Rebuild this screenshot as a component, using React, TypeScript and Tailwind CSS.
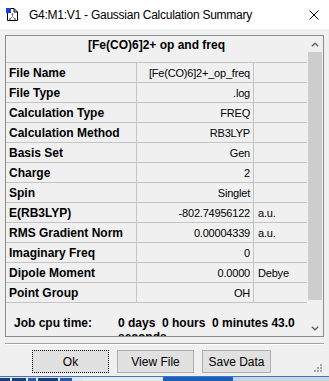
import React from "react";

const rows: [string, string, string][] = [
  ["File Name", "[Fe(CO)6]2+_op_freq", ""],
  ["File Type", ".log", ""],
  ["Calculation Type", "FREQ", ""],
  ["Calculation Method", "RB3LYP", ""],
  ["Basis Set", "Gen", ""],
  ["Charge", "2", ""],
  ["Spin", "Singlet", ""],
  ["E(RB3LYP)", "-802.74956122", "a.u."],
  ["RMS Gradient Norm", "0.00004339", "a.u."],
  ["Imaginary Freq", "0", ""],
  ["Dipole Moment", "0.0000", "Debye"],
  ["Point Group", "OH", ""],
];

function AppIcon() {
  return (
    <svg width="12" height="13" viewBox="0 0 12 13" className="block">
      <path d="M1.5 0.5 H8 L11.5 4 V12.5 H1.5 Z" fill="#fff" stroke="#000" strokeWidth="1" />
      <path d="M8 0.5 V4 H11.5" fill="none" stroke="#000" strokeWidth="1" />
      <rect x="0" y="0" width="5" height="5" fill="#1a3fe0" />
      <path d="M6.5 6 V8.5 M6.5 8.5 L4 11 M6.5 8.5 L9 11" stroke="#8a8a8a" strokeWidth="1" fill="none" />
      <circle cx="6.5" cy="6" r="0.9" fill="#6a6a6a" />
      <circle cx="4" cy="11" r="0.9" fill="#6a6a6a" />
      <circle cx="9" cy="11" r="0.9" fill="#6a6a6a" />
    </svg>
  );
}

export default function App() {
  return (
    <div className="w-[329px] h-[381px] overflow-hidden bg-[#f0f0f0] flex flex-col font-['Liberation_Sans',Arial,sans-serif] text-black">
      {/* Title bar */}
      <div className="h-[29px] bg-white flex items-center pl-[6px] pr-[10px] shrink-0">
        <AppIcon />
        <div className="ml-[11px] text-[12px] tracking-[-0.25px] leading-[14px]">
          G4:M1:V1 - Gaussian Calculation Summary
        </div>
        <div className="flex-1" />
        <svg width="10" height="10" viewBox="0 0 10 10" className="block">
          <path d="M0.5 0.5 L9.5 9.5 M9.5 0.5 L0.5 9.5" stroke="#000" strokeWidth="1" />
        </svg>
      </div>

      {/* Body */}
      <div className="flex-1 flex flex-col px-[5px] pt-[6px]">
        {/* Frame */}
        <div className="h-[302px] border border-[#8c8c8c] flex shrink-0">
          <div className="w-[301px] flex flex-col overflow-hidden">
            <div className="h-[27px] border-b border-[#c4c4c4] flex justify-center pt-[1px] shrink-0">
              <div className="text-[12px] font-bold leading-[16px]">[Fe(CO)6]2+ op and freq</div>
            </div>
            {rows.map(([label, value, unit]) => (
              <div key={label} className="h-[20px] border-b border-[#c4c4c4] flex shrink-0">
                <div className="w-[131px] border-r border-[#c4c4c4] flex items-center pl-[3px] text-[12px] font-bold leading-[14px] whitespace-nowrap">
                  {label}
                </div>
                <div className="w-[117px] border-r border-[#c4c4c4] flex items-center justify-end pr-[3px] text-[11px] tracking-[-0.2px] leading-[14px] whitespace-nowrap">
                  {value}
                </div>
                <div className="flex-1 flex items-center pl-[4px] text-[11px] tracking-[-0.2px] leading-[14px] whitespace-nowrap">
                  {unit}
                </div>
              </div>
            ))}
            <div className="flex-1 overflow-hidden flex pt-[13px] pl-[8px] text-[12px] font-bold leading-[14px]">
              <div className="w-[104px] shrink-0">Job cpu time:</div>
              <div className="w-[182px] whitespace-pre-wrap">{"0 days  0 hours  0 minutes 43.0 seconds"}</div>
            </div>
          </div>
          {/* Scrollbar */}
          <div className="w-[16px] flex flex-col bg-[#f0f0f0]">
            <div className="h-[16px] flex items-center justify-center shrink-0">
              <svg width="8" height="5" viewBox="0 0 8 5" className="block">
                <path d="M0.8 4.3 L4 1.2 L7.2 4.3" stroke="#606060" strokeWidth="1.3" fill="none" />
              </svg>
            </div>
            <div className="flex-1 flex flex-col">
              <div className="h-[248px] mx-[1px] bg-[#cdcdcd]" />
            </div>
            <div className="h-[16px] flex items-center justify-center shrink-0">
              <svg width="8" height="5" viewBox="0 0 8 5" className="block">
                <path d="M0.8 0.7 L4 3.8 L7.2 0.7" stroke="#606060" strokeWidth="1.3" fill="none" />
              </svg>
            </div>
          </div>
        </div>

        {/* Separator */}
        <div className="mt-[6px] h-[1px] bg-[#a0a0a0] shrink-0" />
        <div className="h-[1px] bg-white shrink-0" />

        {/* Buttons */}
        <div className="mt-[5px] flex items-start text-[12px] leading-[14px] shrink-0">
          <div className="ml-[27px] w-[77px] h-[23px] bg-[#e1e1e1] border border-dotted border-black flex items-center justify-center">
            Ok
          </div>
          <div className="ml-[8px] w-[77px] h-[23px] bg-[#e1e1e1] border border-[#adadad] flex items-center justify-center">
            View File
          </div>
          <div className="ml-[8px] w-[69px] h-[23px] bg-[#e1e1e1] border border-[#adadad] flex items-center justify-center">
            Save Data
          </div>
          <div className="flex-1" />
          <svg width="8" height="8" viewBox="0 0 8 8" className="block mt-[14px] mr-[2px]">
            <rect x="6" y="0" width="2" height="2" fill="#a8a8a8" />
            <rect x="3" y="3" width="2" height="2" fill="#a8a8a8" />
            <rect x="6" y="3" width="2" height="2" fill="#a8a8a8" />
            <rect x="0" y="6" width="2" height="2" fill="#a8a8a8" />
            <rect x="3" y="6" width="2" height="2" fill="#a8a8a8" />
            <rect x="6" y="6" width="2" height="2" fill="#a8a8a8" />
          </svg>
        </div>
      </div>

      {/* Background windows peeking below */}
      <div className="h-[1px] bg-[#3b78c4] shrink-0" />
      <div className="h-[4px] flex shrink-0">
        <div className="w-[83px] bg-[#dfe4ea] flex gap-[2px] items-end">
          <div className="w-[10px] h-[3px] bg-[#1c3f78]" />
          <div className="w-[14px] h-[3px] bg-[#1c3f78]" />
          <div className="w-[8px] h-[3px] bg-[#2a5ba0]" />
          <div className="w-[20px] h-[3px] bg-[#1c3f78]" />
          <div className="w-[12px] h-[3px] bg-[#2a5ba0]" />
        </div>
        <div className="w-[80px] bg-[#e6e9ee]" />
        <div className="w-[70px] bg-[#1d5fb8]" />
        <div className="flex-1 bg-[#c9d4e2]" />
      </div>
    </div>
  );
}
